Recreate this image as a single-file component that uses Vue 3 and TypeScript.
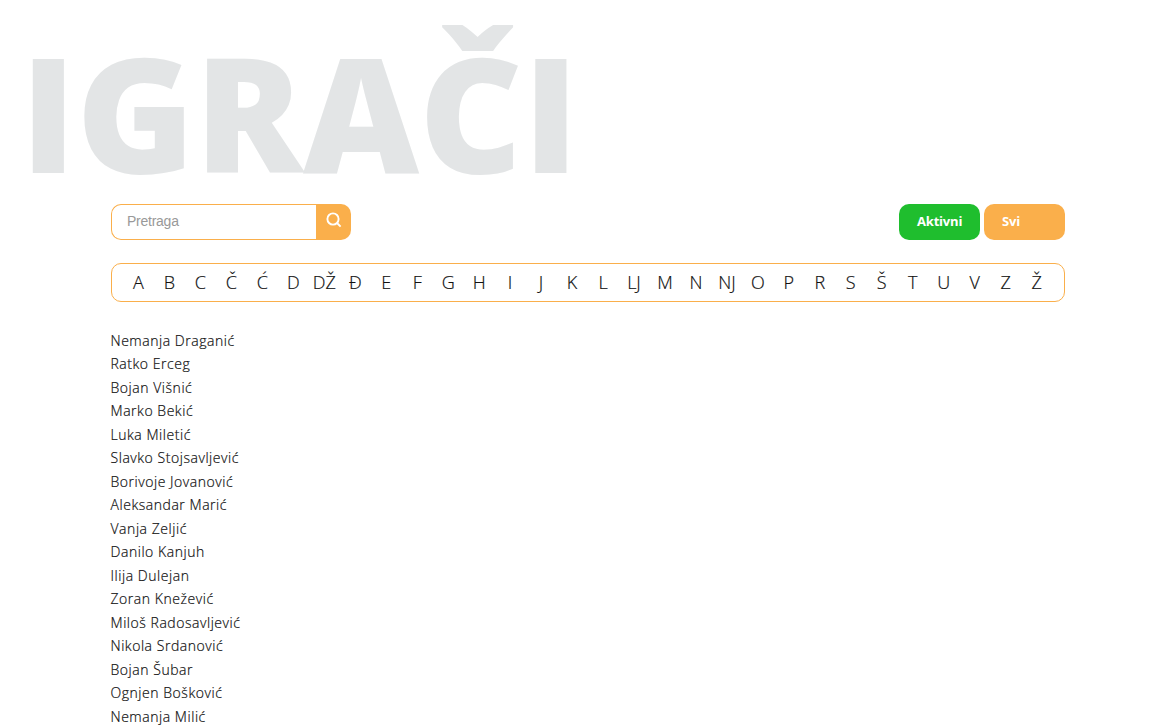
<script setup lang="ts">
const letters: string[] = ['A', 'B', 'C', 'Č', 'Ć', 'D', 'DŽ', 'Đ', 'E', 'F', 'G', 'H', 'I', 'J', 'K', 'L', 'LJ', 'M', 'N', 'NJ', 'O', 'P', 'R', 'S', 'Š', 'T', 'U', 'V', 'Z', 'Ž']
const players: string[] = [
  'Nemanja Draganić', 'Ratko Erceg', 'Bojan Višnić', 'Marko Bekić', 'Luka Miletić',
  'Slavko Stojsavljević', 'Borivoje Jovanović', 'Aleksandar Marić', 'Vanja Zeljić',
  'Danilo Kanjuh', 'Ilija Dulejan', 'Zoran Knežević', 'Miloš Radosavljević',
  'Nikola Srdanović', 'Bojan Šubar', 'Ognjen Bošković', 'Nemanja Milić',
]
</script>

<template>
  <main class="page">
    <h1 class="title">IGRAČI</h1>
    <div class="content">
      <div class="toolbar">
        <form class="search" @submit.prevent>
          <input class="field" type="text" placeholder="Pretraga" />
          <button class="go" type="submit" aria-label="Pretraga">
            <svg width="16" height="16" viewBox="0 0 16 16" fill="none" stroke="#fff" stroke-width="1.9">
              <circle cx="7" cy="7" r="5.6" />
              <path d="M11 11L14.6 14.6" />
            </svg>
          </button>
        </form>
        <div class="filters">
          <button class="filter active">Aktivni</button>
          <button class="filter">Svi</button>
        </div>
      </div>
      <nav class="letters">
        <a v-for="l in letters" :key="l" class="letter">{{ l }}</a>
      </nav>
      <ul class="players">
        <li v-for="p in players" :key="p">{{ p }}</li>
      </ul>
    </div>
  </main>
</template>

<style>
body { background: #fff; overflow: hidden; }
</style>

<style scoped>
.page { height: 728px; overflow: hidden; font-family: "Open Sans", sans-serif; color: #111; }
.title { margin: 0; padding: 0 0 0 20.5px; height: 204px; line-height: 222px; font-size: 160px; font-weight: 800; color: #e3e5e6; white-space: nowrap; }
.content { width: 954px; margin-left: 111px; }
.toolbar { display: flex; justify-content: space-between; height: 36px; }
.search { display: flex; width: 240px; }
.field { box-sizing: border-box; width: 205px; height: 36px; padding: 0 15px 2px; border: 1px solid #faaf4b; border-right: 0; border-radius: 10px 0 0 10px; font: 14px "Liberation Sans", Arial, sans-serif; letter-spacing: -0.25px; outline: 0; }
.field::placeholder { color: #999; opacity: 1; }
.go { width: 35px; height: 36px; padding: 0 0 4px; border: 0; border-radius: 0 10px 10px 0; background: #faaf4b; display: flex; align-items: center; justify-content: center; }
.filters { display: flex; gap: 4px; }
.filter { width: 81px; height: 36px; padding: 0 18px 2px; border: 0; border-radius: 10px; background: #faaf4b; color: #fff; font: 700 13px "Open Sans", sans-serif; letter-spacing: -0.2px; text-align: left; }
.filter.active { background: #1fbe2e; }
.letters { box-sizing: border-box; height: 39px; margin-top: 23px; padding: 0 12px 0 11px; border: 1px solid #faaf4b; border-radius: 10px; display: flex; }
.letter { flex: 1 1 0; min-width: 0; display: flex; justify-content: center; font-size: 18px; line-height: 37px; font-weight: 300; -webkit-text-stroke: 0.2px #111; white-space: nowrap; }
.players { list-style: none; margin: 26.5px 0 0 -0.5px; padding: 0; font-size: 14px; line-height: 23.5px; font-weight: 300; letter-spacing: 0.54px; -webkit-text-stroke: 0.2px #111; }
</style>
